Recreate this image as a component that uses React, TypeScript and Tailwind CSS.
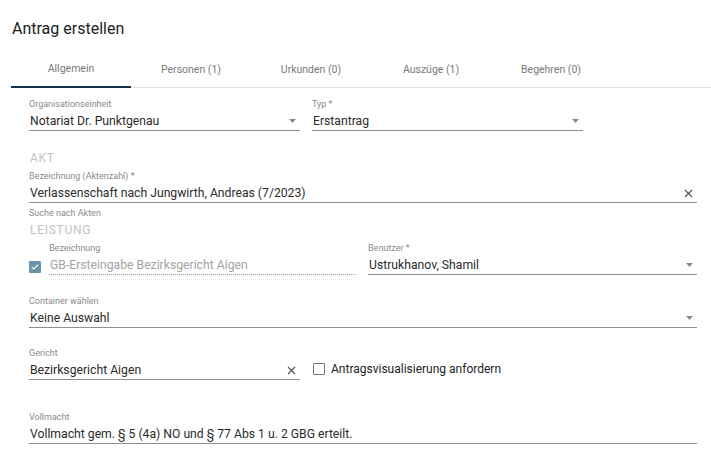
import React from "react";

const tabs = ["Allgemein", "Personen (1)", "Urkunden (0)", "Auszüge (1)", "Begehren (0)"];

function Arrow() {
  return (
    <svg width="7" height="4" viewBox="0 0 7 4" className="shrink-0">
      <path d="M0 0h7L3.5 4z" fill="#8a8a8a" />
    </svg>
  );
}

function Clear() {
  return (
    <svg width="9" height="9" viewBox="0 0 9 9" className="shrink-0">
      <path d="M1 1l7 7M8 1l-7 7" stroke="#555" strokeWidth="1.2" />
    </svg>
  );
}

function Field({
  label,
  value,
  icon,
  disabled,
  className = "",
}: {
  label: string;
  value: string;
  icon?: "arrow" | "clear";
  disabled?: boolean;
  className?: string;
}) {
  return (
    <div className={`flex flex-col ${className}`}>
      <div className="h-[12px] text-[9px] leading-[12px] text-[#8a8a8a]">{label}</div>
      <div
        className={`flex h-[21px] items-center justify-between pr-[4px] pt-[2px] ${
          disabled
            ? "border-b border-dotted border-[#9e9e9e] text-[#a3a3a3]"
            : "border-b border-[#8f8f8f] text-[#2b2b2b]"
        }`}
      >
        <span className="pl-px text-[12.2px] leading-[18px]">{value}</span>
        {icon === "arrow" && <Arrow />}
        {icon === "clear" && <Clear />}
      </div>
    </div>
  );
}

function Section({ children }: { children: React.ReactNode }) {
  return (
    <div className="h-[16px] pl-px text-[12px] leading-[16px] tracking-[0.06em] text-[#c2c2c2]">
      {children}
    </div>
  );
}

export default function App() {
  return (
    <div className="min-h-[460px] bg-white font-['Roboto',sans-serif]">
      <div className="pl-[12px] pt-[17px] text-[16px] leading-[24px] text-[#212121]">Antrag erstellen</div>

      <div className="ml-[11px] mt-[10px] flex h-[37px] border-b border-[#e0e0e0]">
        {tabs.map((t, i) => (
          <div
            key={t}
            className={`-mb-px flex w-[120px] items-center justify-center pt-px text-[10.5px] text-[#7a7a7a] ${
              i === 0 ? "border-b-2 border-[#14304f]" : ""
            }`}
          >
            {t}
          </div>
        ))}
      </div>

      <div className="pl-[29px] pr-[14px]">
        <div className="mt-[10px] flex gap-[12px]">
          <Field className="w-[271px]" label="Organisationseinheit" value="Notariat Dr. Punktgenau" icon="arrow" />
          <Field className="w-[271px]" label="Typ *" value="Erstantrag" icon="arrow" />
        </div>

        <div className="mt-[19px]">
          <Section>AKT</Section>
        </div>
        <Field
          className="mt-[4px]"
          label="Bezeichnung (Aktenzahl) *"
          value="Verlassenschaft nach Jungwirth, Andreas (7/2023)"
          icon="clear"
        />
        <div className="mt-[4px] h-[12px] text-[9px] leading-[12px] text-[#8a8a8a]">Suche nach Akten</div>
        <div className="mt-[3px]">
          <Section>LEISTUNG</Section>
        </div>

        <div className="mt-[4px] flex gap-[12px]">
          <div className="flex w-[327px] items-end gap-[8px]">
            <div className="mb-[2px] flex h-[12px] w-[12px] shrink-0 items-center justify-center rounded-[1px] bg-[#6b93ab]">
              <svg width="8" height="6" viewBox="0 0 8 6">
                <path d="M0.8 3l2 2 4.4-4.4" fill="none" stroke="#fff" strokeWidth="1.1" />
              </svg>
            </div>
            <Field className="flex-1" label="Bezeichnung" value="GB-Ersteingabe Bezirksgericht Aigen" disabled />
          </div>
          <Field className="flex-1" label="Benutzer *" value="Ustrukhanov, Shamil" icon="arrow" />
        </div>

        <Field className="mt-[20px]" label="Container wählen" value="Keine Auswahl" icon="arrow" />

        <div className="mt-[19px] flex items-end gap-[13px]">
          <Field className="w-[271px]" label="Gericht" value="Bezirksgericht Aigen" icon="clear" />
          <label className="mb-[3px] flex items-center gap-[6px] text-[12px] leading-[16px] text-[#222]">
            <span className="h-[12px] w-[12px] rounded-[1px] border border-[#757575]" />
            Antragsvisualisierung anfordern
          </label>
        </div>

        <Field
          className="mt-[31px]"
          label="Vollmacht"
          value="Vollmacht gem. § 5 (4a) NO und § 77 Abs 1 u. 2 GBG erteilt."
        />
      </div>
    </div>
  );
}
